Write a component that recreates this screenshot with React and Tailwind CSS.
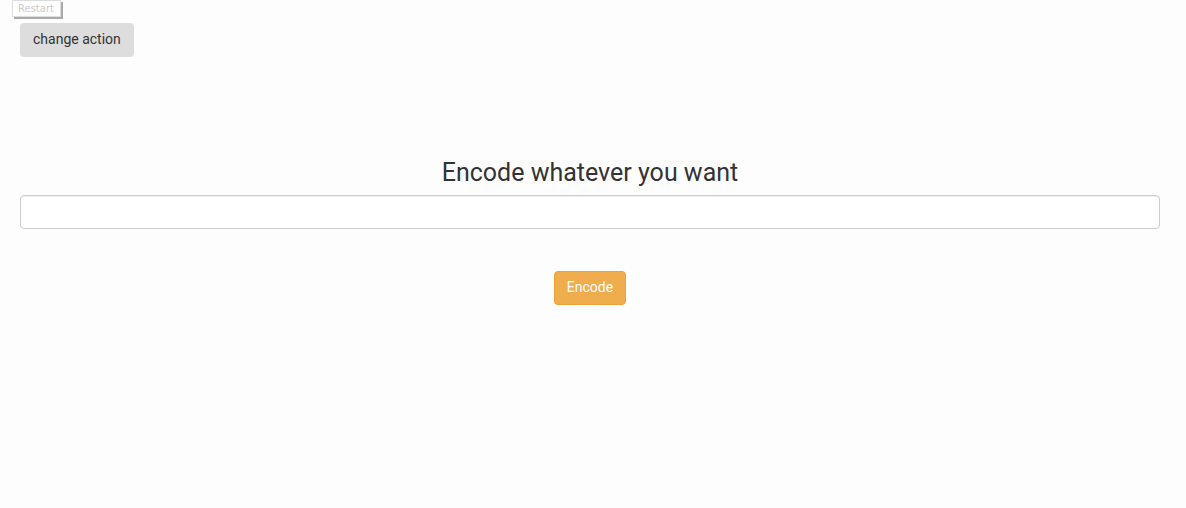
export default function App() {
  return (
    <div className="min-h-[508px] bg-[#fdfdfd] font-['Roboto',sans-serif] text-[#333]">
      {/* top controls */}
      <div className="pl-[12px]">
        <button className="block h-[17px] w-[49px] border border-[#ddd] bg-white text-left pl-[5px] font-['DejaVu_Sans','Liberation_Sans',sans-serif] text-[10px] leading-[14px] text-[#ccc] shadow-[2px_2px_0_#aaa]">
          Restart
        </button>
      </div>
      <div className="pl-[20px] pt-[6px]">
        <button className="h-[34px] rounded-[4px] bg-[#ddd] px-[13px] pb-[2px] text-[14px] leading-[30px] text-[#333]">
          change action
        </button>
      </div>

      {/* encoder form */}
      <div className="pl-[20px] pr-[26px] pt-[103px]">
        <h3 className="mb-[9px] text-center text-[25px] font-normal leading-[26px] text-[#333]">
          Encode whatever you want
        </h3>
        <input
          type="text"
          className="block h-[34px] w-full rounded-[4px] border border-[#ccc] bg-white px-3 text-[14px] shadow-[inset_0_1px_1px_rgba(0,0,0,0.075)] outline-none"
        />
        <div className="flex justify-center pt-[42px]">
          <button className="h-[34px] w-[72px] rounded-[4px] border border-[#eea236] bg-[#f0ad4e] pb-[2px] text-[14px] leading-[28px] text-white">
            Encode
          </button>
        </div>
      </div>
    </div>
  );
}
